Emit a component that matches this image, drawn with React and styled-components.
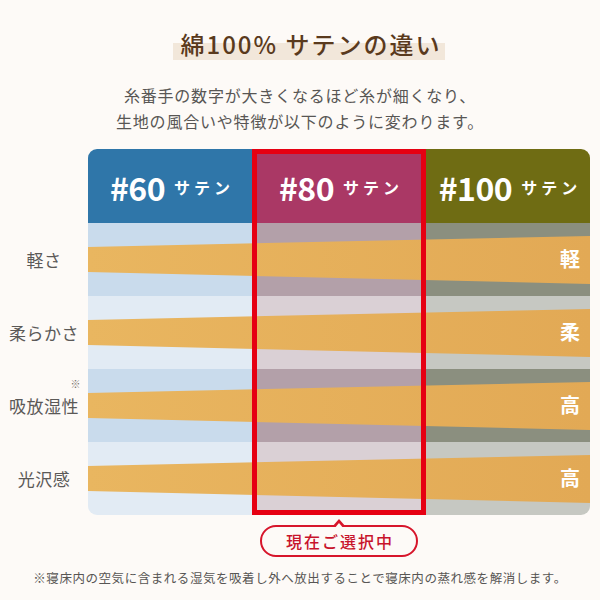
import React from 'react';
import styled, { createGlobalStyle } from 'styled-components';

const GlobalStyle = createGlobalStyle`
  html, body {
    margin: 0;
    padding: 0;
    background: #fdfaf7;
  }
  body {
    font-family: "Noto Sans CJK JP", "Noto Sans", sans-serif;
    color: #585654;
  }
`;

const Page = styled.div`
  width: 600px;
  height: 600px;
  box-sizing: border-box;
  padding-top: 27px;
  display: flex;
  flex-direction: column;
  align-items: center;
`;

const Title = styled.h1`
  margin: 0 0 0 18px;
  padding: 0 4px 0 8px;
  font-size: 24px;
  font-weight: 500;
  line-height: 33px;
  letter-spacing: 2px;
  color: #5a3a1d;
  background: linear-gradient(transparent 16px, #f2e7da 16px);
`;

const Lead = styled.p`
  margin: 22px 0 15px;
  font-size: 16px;
  line-height: 26px;
  letter-spacing: 0.8px;
  text-align: center;
  color: #585654;
`;

const Chart = styled.div`
  width: 600px;
  display: grid;
  grid-template-columns: 88px 502px;
`;

const Labels = styled.div`
  display: flex;
  flex-direction: column;
  padding-top: 74px;
`;

const LabelCell = styled.div`
  height: 73px;
  display: flex;
  align-items: center;
  justify-content: center;
`;

const Label = styled.span`
  position: relative;
  font-size: 17px;
  letter-spacing: 0.5px;
  color: #5b5957;
`;

const Note = styled.span`
  position: absolute;
  right: -2px;
  top: -15px;
  font-size: 10px;
  line-height: 12px;
  color: #77706b;
`;

const Table = styled.div`
  position: relative;
  width: 502px;
  border-radius: 9px;
  overflow: hidden;
`;

const HeaderRow = styled.div`
  display: grid;
  grid-template-columns: 164px 174px 164px;
  height: 74px;
`;

const HeadCell = styled.div`
  background: ${p => p.$bg};
  color: #fff;
  font-weight: 700;
  display: flex;
  align-items: center;
  justify-content: center;
  padding-top: 2px;
`;

const Num = styled.span`
  font-size: 32px;
  letter-spacing: -0.5px;
`;

const Unit = styled.span`
  font-size: 16px;
  letter-spacing: 4px;
  margin-left: 9px;
  margin-right: -4px;
`;

const BodyRow = styled.div`
  position: relative;
  display: grid;
  grid-template-columns: 164px 174px 164px;
  height: 73px;
`;

const Tone = styled.div`
  background: ${p => p.$bg};
  display: flex;
  align-items: center;
  justify-content: flex-end;
  padding-right: 10px;
`;

const Wedge = styled.svg`
  position: absolute;
  inset: 0;
  width: 100%;
  height: 100%;
  z-index: 1;
`;

const Mark = styled.span`
  position: relative;
  z-index: 2;
  color: #fff;
  font-size: 20px;
  font-weight: 700;
  margin-top: -2px;
`;

const Frame = styled.div`
  position: absolute;
  top: 0;
  bottom: 0;
  left: 164px;
  width: 174px;
  box-sizing: border-box;
  border: 5px solid #e60012;
  z-index: 3;
`;

const BadgeRow = styled.div`
  width: 600px;
  display: grid;
  grid-template-columns: 252px 174px;
  padding-top: 10px;
`;

const Badge = styled.div`
  grid-column: 2;
  justify-self: center;
  position: relative;
  width: 158px;
  height: 32px;
  box-sizing: border-box;
  border: 2px solid #d7152b;
  border-radius: 16px;
  background: #fdfaf7;
  color: #c8142c;
  font-size: 16px;
  font-weight: 500;
  letter-spacing: 2px;
  display: flex;
  align-items: center;
  justify-content: center;
  padding-left: 2px;

  &::before,
  &::after {
    content: '';
    position: absolute;
    left: 50%;
    transform: translateX(-50%);
    border-style: solid;
    border-color: transparent;
  }
  &::before {
    top: -8px;
    border-width: 0 7px 8px;
    border-bottom-color: #d7152b;
  }
  &::after {
    top: -4px;
    border-width: 0 5px 6px;
    border-bottom-color: #fdfaf7;
  }
`;

const Footnote = styled.p`
  margin: 12px 0 0;
  font-size: 12.5px;
  line-height: 18px;
  letter-spacing: 0.55px;
  color: #585654;
`;

const columns = [
  { num: '#60', head: '#2f76a9', tones: ['#c9dbec', '#e2ebf4'] },
  { num: '#80', head: '#aa3865', tones: ['#b3a0a9', '#dad0d5'] },
  { num: '#100', head: '#6f6c13', tones: ['#8b8f7f', '#c6c8c2'] },
];

const rows = [
  { label: '軽さ', mark: '軽' },
  { label: '柔らかさ', mark: '柔' },
  { label: '吸放湿性', mark: '高', note: true },
  { label: '光沢感', mark: '高' },
];

function OrangeBand({ id }) {
  return (
    <Wedge viewBox="0 0 502 73" preserveAspectRatio="none">
      <defs>
        <linearGradient id={id} x1="0" x2="1" y1="0" y2="0">
          <stop offset="0" stopColor="#e9b660" />
          <stop offset="1" stopColor="#e2a955" />
        </linearGradient>
      </defs>
      <polygon points="0,24 502,13 502,61 0,49" fill={`url(#${id})`} />
    </Wedge>
  );
}

export default function App() {
  return (
    <Page>
      <GlobalStyle />
      <Title>綿100% サテンの違い</Title>
      <Lead>
        糸番手の数字が大きくなるほど糸が細くなり、<br />
        生地の風合いや特徴が以下のように変わります。
      </Lead>

      <Chart>
        <Labels>
          {rows.map(r => (
            <LabelCell key={r.label}>
              <Label>
                {r.label}
                {r.note && <Note>※</Note>}
              </Label>
            </LabelCell>
          ))}
        </Labels>

        <Table>
          <HeaderRow>
            {columns.map(c => (
              <HeadCell key={c.num} $bg={c.head}>
                <Num>{c.num}</Num>
                <Unit>サテン</Unit>
              </HeadCell>
            ))}
          </HeaderRow>
          {rows.map((r, i) => (
            <BodyRow key={r.label}>
              {columns.map((c, j) => (
                <Tone key={c.num} $bg={c.tones[i % 2]}>
                  {j === 2 && <Mark>{r.mark}</Mark>}
                </Tone>
              ))}
              <OrangeBand id={`band${i}`} />
            </BodyRow>
          ))}
          <Frame />
        </Table>
      </Chart>

      <BadgeRow>
        <Badge>現在ご選択中</Badge>
      </BadgeRow>

      <Footnote>※寝床内の空気に含まれる湿気を吸着し外へ放出することで寝床内の蒸れ感を解消します。</Footnote>
    </Page>
  );
}
